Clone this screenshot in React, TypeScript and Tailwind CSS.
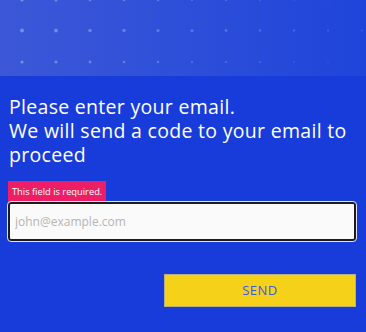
import React from 'react';

// Header band with a faded dot grid, then the email form.
function DotPattern() {
    const cols = Array.from({ length: 11 }, (_, i) => 22 + i * 34);
    const rows = [0, 30.5, 62];
    return (
        <svg className="absolute inset-0" width="366" height="76" viewBox="0 0 366 76">
            {rows.map((y) =>
                cols.map((x, i) => (
                    <circle
                        key={`${x}-${y}`}
                        cx={x}
                        cy={y}
                        r={(y === 30.5 ? 2 : 1.6) - i * 0.1}
                        fill="#ffffff"
                        fillOpacity={0.32 - i * 0.02}
                    />
                ))
            )}
        </svg>
    );
}

export default function App() {
    return (
        <div
            className="w-[366px] h-[332px] bg-[#183cd9] text-white overflow-hidden"
            style={{ fontFamily: '"Open Sans", "Noto Sans", sans-serif' }}
        >
            <div className="relative h-[76px] bg-gradient-to-r from-[#3c58d7] to-[#1e44da]">
                <DotPattern />
            </div>

            <div className="pl-2 pr-[10px]">
                <h1 className="mt-[19px] pl-[1px] text-[19.5px] leading-[24px] font-normal tracking-[0.3px]">
                    Please enter your email.
                    <br />
                    We will send a code to your email to proceed
                </h1>

                <div className="mt-[14px]">
                    <div className="w-fit bg-[#ed1e66] px-[4px] h-[21px] leading-[21px] text-[9.3px] text-white">
                        This field is required.
                    </div>
                    <input
                        type="email"
                        placeholder="john@example.com"
                        className="block w-full h-[39px] rounded-[3px] border-2 border-[#1c1c1c] bg-[#fafafa] px-[5px] text-[12px] text-gray-700 placeholder:text-[#b5b5b5] outline outline-1 outline-[#dfe3f5] outline-offset-0"
                    />
                </div>

                <div className="mt-[33px] flex justify-end">
                    <button className="w-[192px] h-[33px] bg-[#f5d11a] border border-[#b9b07a] text-[13px] tracking-[0.5px] text-[#3c5ae0]">
                        SEND
                    </button>
                </div>
            </div>
        </div>
    );
}
